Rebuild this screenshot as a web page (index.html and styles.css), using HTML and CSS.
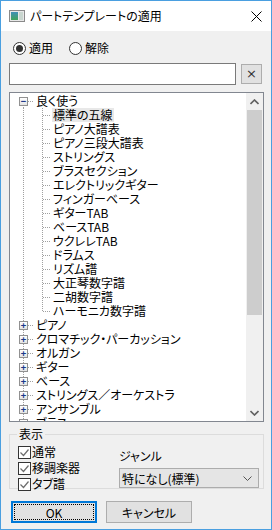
FILE: index.html
```html
<!DOCTYPE html>
<html lang="ja">
<head>
  <meta charset="UTF-8">
  <title>パートテンプレートの適用</title>
  <link rel="stylesheet" href="styles.css">
</head>
<body>
  <div class="window">
    <div class="titlebar">
      <svg class="app-icon" width="16" height="12" viewBox="0 0 16 12">
        <defs>
          <linearGradient id="ig" x1="0" y1="0" x2="0" y2="1">
            <stop offset="0" stop-color="#3f8fb7"/>
            <stop offset="1" stop-color="#3fa35a"/>
          </linearGradient>
        </defs>
        <rect x="0.5" y="0.5" width="15" height="11" fill="#e8e8e8" stroke="#8a8a8a"/>
        <rect x="2" y="2" width="7" height="8" fill="url(#ig)"/>
        <rect x="10" y="2" width="4" height="8" fill="#c9d6cf"/>
      </svg>
      <span class="title">パートテンプレートの適用</span>
      <svg class="close" width="11" height="11" viewBox="0 0 11 11">
        <path d="M0.5 0.5 L10.5 10.5 M10.5 0.5 L0.5 10.5" stroke="#000" stroke-width="1"/>
      </svg>
    </div>

    <div class="content">
      <div class="radios">
        <label class="radio"><span class="dot on"></span>適用</label>
        <label class="radio"><span class="dot"></span>解除</label>
      </div>

      <div class="search-row">
        <input class="search" type="text">
        <button class="clear-btn">×</button>
      </div>

      <div class="tree">
        <div class="tree-list">
          <div class="row root first">
            <span class="lines"><span class="toggle">−</span></span>
            <span class="label">良く使う</span>
          </div>
          <div class="row child"><span class="lines"></span><span class="stub"></span><span class="label selected">標準の五線</span></div>
          <div class="row child"><span class="lines"></span><span class="stub"></span><span class="label">ピアノ大譜表</span></div>
          <div class="row child"><span class="lines"></span><span class="stub"></span><span class="label">ピアノ三段大譜表</span></div>
          <div class="row child"><span class="lines"></span><span class="stub"></span><span class="label">ストリングス</span></div>
          <div class="row child"><span class="lines"></span><span class="stub"></span><span class="label">ブラスセクション</span></div>
          <div class="row child"><span class="lines"></span><span class="stub"></span><span class="label">エレクトリックギター</span></div>
          <div class="row child"><span class="lines"></span><span class="stub"></span><span class="label">フィンガーベース</span></div>
          <div class="row child"><span class="lines"></span><span class="stub"></span><span class="label">ギターTAB</span></div>
          <div class="row child"><span class="lines"></span><span class="stub"></span><span class="label">ベースTAB</span></div>
          <div class="row child"><span class="lines"></span><span class="stub"></span><span class="label">ウクレレTAB</span></div>
          <div class="row child"><span class="lines"></span><span class="stub"></span><span class="label">ドラムス</span></div>
          <div class="row child"><span class="lines"></span><span class="stub"></span><span class="label">リズム譜</span></div>
          <div class="row child"><span class="lines"></span><span class="stub"></span><span class="label">大正琴数字譜</span></div>
          <div class="row child"><span class="lines"></span><span class="stub"></span><span class="label">二胡数字譜</span></div>
          <div class="row child"><span class="lines"></span><span class="stub last"></span><span class="label">ハーモニカ数字譜</span></div>
          <div class="row root"><span class="lines"><span class="toggle">+</span></span><span class="label">ピアノ</span></div>
          <div class="row root"><span class="lines"><span class="toggle">+</span></span><span class="label">クロマチック・パーカッション</span></div>
          <div class="row root"><span class="lines"><span class="toggle">+</span></span><span class="label">オルガン</span></div>
          <div class="row root"><span class="lines"><span class="toggle">+</span></span><span class="label">ギター</span></div>
          <div class="row root"><span class="lines"><span class="toggle">+</span></span><span class="label">ベース</span></div>
          <div class="row root"><span class="lines"><span class="toggle">+</span></span><span class="label">ストリングス／オーケストラ</span></div>
          <div class="row root"><span class="lines"><span class="toggle">+</span></span><span class="label">アンサンブル</span></div>
          <div class="row root"><span class="lines"><span class="toggle">+</span></span><span class="label">ブラス</span></div>
        </div>
        <div class="scrollbar">
          <div class="arrow">
            <svg width="9" height="6" viewBox="0 0 9 6"><path d="M0.5 5 L4.5 1 L8.5 5" fill="none" stroke="#606060" stroke-width="1.6"/></svg>
          </div>
          <div class="thumb"></div>
          <div class="track"></div>
          <div class="arrow">
            <svg width="9" height="6" viewBox="0 0 9 6"><path d="M0.5 1 L4.5 5 L8.5 1" fill="none" stroke="#606060" stroke-width="1.6"/></svg>
          </div>
        </div>
      </div>

      <fieldset class="group">
        <legend>表示</legend>
        <div class="checks">
          <label class="check"><span class="box"><svg width="11" height="11" viewBox="0 0 11 11"><path d="M1.5 5.5 L4.5 8.5 L9.5 2.5" fill="none" stroke="#6d6d6d" stroke-width="1.2"/></svg></span>通常</label>
          <label class="check"><span class="box"><svg width="11" height="11" viewBox="0 0 11 11"><path d="M1.5 5.5 L4.5 8.5 L9.5 2.5" fill="none" stroke="#6d6d6d" stroke-width="1.2"/></svg></span>移調楽器</label>
          <label class="check"><span class="box"><svg width="11" height="11" viewBox="0 0 11 11"><path d="M1.5 5.5 L4.5 8.5 L9.5 2.5" fill="none" stroke="#6d6d6d" stroke-width="1.2"/></svg></span>タブ譜</label>
        </div>
        <div class="genre">
          <span class="genre-label">ジャンル</span>
          <div class="select">
            <span>特になし(標準)</span>
            <svg width="9" height="5" viewBox="0 0 9 5"><path d="M0.5 0.5 L4.5 4.5 L8.5 0.5" fill="none" stroke="#555" stroke-width="1"/></svg>
          </div>
        </div>
      </fieldset>

      <div class="buttons">
        <button class="btn default"><span class="focus">OK</span></button>
        <button class="btn">キャンセル</button>
      </div>
    </div>
  </div>
</body>
</html>
```

FILE: styles.css
```css
* {
  margin: 0;
  padding: 0;
  box-sizing: border-box;
}

body {
  font-family: 'Noto Sans CJK JP', 'Noto Sans', sans-serif;
  font-size: 12px;
  font-feature-settings: "palt";
  color: #000;
  background-color: #f0f0f0;
}

.window {
  width: 272px;
  height: 530px;
  border: 1px solid #4a9fe0;
  background-color: #f0f0f0;
  display: flex;
  flex-direction: column;
}

.titlebar {
  height: 30px;
  background-color: #fff;
  display: flex;
  align-items: center;
  padding-left: 8px;
}

.app-icon {
  margin-right: 5px;
}

.title {
  flex: 1;
  line-height: 14px;
}

.close {
  margin-right: 9px;
}

.content {
  padding: 10px 8px 0 8px;
  flex: 1;
}

/* radios */
.radios {
  display: flex;
  height: 14px;
  align-items: center;
  padding-left: 4px;
}

.radio {
  display: flex;
  align-items: center;
  line-height: 14px;
  margin-right: 16px;
}

.dot {
  width: 13px;
  height: 13px;
  border: 1px solid #333;
  border-radius: 50%;
  background-color: #fff;
  margin-right: 3px;
  display: flex;
  justify-content: center;
  align-items: center;
}

.dot.on::after {
  content: "";
  width: 7px;
  height: 7px;
  border-radius: 50%;
  background-color: #333;
}

/* search */
.search-row {
  display: flex;
  align-items: center;
  margin-top: 8px;
  height: 22px;
}

.search {
  width: 227px;
  height: 22px;
  border: 1px solid #7a7a7a;
  background-color: #fff;
}

.clear-btn {
  width: 21px;
  height: 20px;
  margin-left: 5px;
  background-color: #e1e1e1;
  border: 1px solid #adadad;
  font-family: 'DejaVu Sans', sans-serif;
  font-size: 13px;
  line-height: 16px;
  color: #333;
}

/* tree */
.tree {
  margin-top: 7px;
  width: 255px;
  height: 330px;
  border: 1px solid #828790;
  background-color: #fff;
  display: flex;
}

.tree-list {
  flex: 1;
  overflow: hidden;
  padding-top: 1px;
}

.row {
  display: flex;
  height: 14px;
  line-height: 14px;
  white-space: nowrap;
}

.lines {
  width: 25px;
  flex: none;
  display: flex;
  align-items: center;
  background:
    repeating-linear-gradient(to bottom, #a0a0a0 0 1px, transparent 1px 2px) 13px 0 / 1px 100% no-repeat;
}

.row.root .lines {
  background:
    repeating-linear-gradient(to bottom, #a0a0a0 0 1px, transparent 1px 2px) 13px 0 / 1px 100% no-repeat,
    repeating-linear-gradient(to right, #a0a0a0 0 1px, transparent 1px 2px) 18px 7px / 6px 1px no-repeat;
}

.row.root.first .lines {
  background:
    repeating-linear-gradient(to bottom, #a0a0a0 0 1px, transparent 1px 2px) 13px 7px / 1px 7px no-repeat,
    repeating-linear-gradient(to right, #a0a0a0 0 1px, transparent 1px 2px) 18px 7px / 6px 1px no-repeat;
}

.toggle {
  width: 9px;
  height: 9px;
  margin-left: 9px;
  border: 1px solid #919191;
  background: linear-gradient(#fff, #e4e4e4);
  color: #1c3a8a;
  font-family: 'DejaVu Sans Mono', monospace;
  font-size: 9px;
  font-weight: bold;
  line-height: 7px;
  text-align: center;
}

.stub {
  width: 17px;
  flex: none;
  background:
    repeating-linear-gradient(to bottom, #a0a0a0 0 1px, transparent 1px 2px) 7px 0 / 1px 100% no-repeat,
    repeating-linear-gradient(to right, #a0a0a0 0 1px, transparent 1px 2px) 8px 7px / 8px 1px no-repeat;
}

.stub.last {
  background:
    repeating-linear-gradient(to bottom, #a0a0a0 0 1px, transparent 1px 2px) 7px 0 / 1px 8px no-repeat,
    repeating-linear-gradient(to right, #a0a0a0 0 1px, transparent 1px 2px) 8px 7px / 8px 1px no-repeat;
}

.label {
  padding: 0 1px;
}

.label.selected {
  background-color: #e8e8e8;
}

.scrollbar {
  width: 17px;
  flex: none;
  background-color: #f0f0f0;
  display: flex;
  flex-direction: column;
}

.arrow {
  height: 17px;
  display: flex;
  justify-content: center;
  align-items: center;
}

.thumb {
  height: 205px;
  margin: 0 1px;
  background-color: #cdcdcd;
}

.track {
  flex: 1;
}

/* group */
.group {
  margin-top: 5px;
  width: 255px;
  height: 62px;
  border: 1px solid #dcdcdc;
  padding: 0 0 0 8px;
  display: flex;
}

.group legend {
  margin-left: -1px;
  padding: 0 2px;
  line-height: 14px;
}

.checks {
  width: 101px;
  display: flex;
  flex-direction: column;
  gap: 2px;
  padding-top: 4px;
}

.check {
  display: flex;
  align-items: center;
  height: 14px;
  line-height: 14px;
}

.box {
  width: 13px;
  height: 13px;
  border: 1px solid #333;
  background-color: #fff;
  margin-right: 1px;
  display: flex;
  justify-content: center;
  align-items: center;
}

.genre {
  display: flex;
  flex-direction: column;
  padding-top: 8px;
}

.genre-label {
  line-height: 14px;
}

.select {
  margin-top: 5px;
  width: 140px;
  height: 20px;
  background-color: #e5e5e5;
  border: 1px solid #acacac;
  display: flex;
  align-items: center;
  justify-content: space-between;
  padding: 0 6px 0 2px;
}

/* buttons */
.buttons {
  display: flex;
  gap: 9px;
  margin-top: 12px;
  padding-left: 2px;
}

.btn {
  width: 86px;
  height: 22px;
  background-color: #e1e1e1;
  border: 1px solid #adadad;
  font-family: inherit;
  font-size: 12px;
  font-feature-settings: "palt";
  color: #000;
  display: flex;
  justify-content: center;
  align-items: center;
}

.btn.default {
  border: 2px solid #0078d7;
  padding: 1px;
}

.btn.default .focus {
  width: 100%;
  height: 100%;
  border: 1px dotted #000;
  display: flex;
  justify-content: center;
  align-items: center;
}
```
